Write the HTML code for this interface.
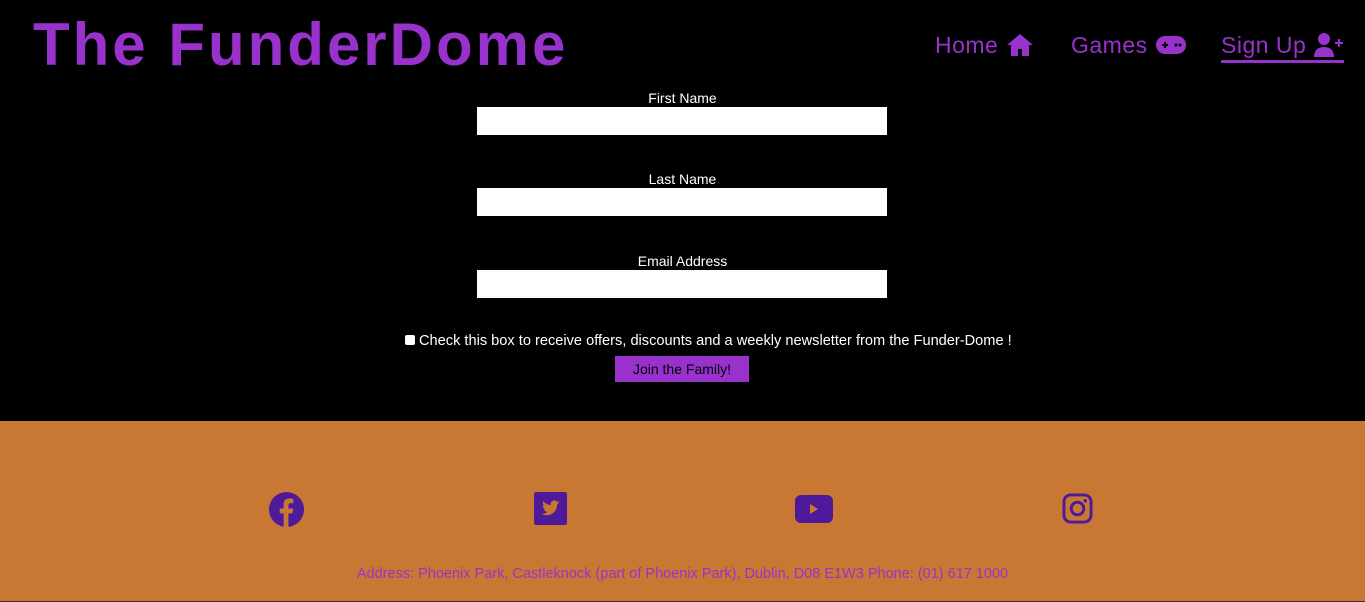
<!DOCTYPE html>
<html><head><style>
body{margin:0;width:1365px;height:602px;background:#000;font-family:"Liberation Sans",sans-serif;overflow:hidden;position:relative}
.logo{position:absolute;left:33px;top:10px;color:#9932cc;font-size:60px;font-weight:bold;letter-spacing:3px;line-height:70px}
.nav{position:absolute;top:30px;color:#9932cc;font-size:23px;line-height:30px;display:flex;align-items:center;gap:8px;letter-spacing:.5px}
.nav svg{fill:#9932cc}
label{position:absolute;color:#fff;font-size:14px;width:100%;text-align:center;left:0}
.in{position:absolute;left:477px;width:410px;height:28px;background:#fff}
footer{position:absolute;left:0;top:421px;width:1365px;height:180px;background:#c87832;border-bottom:1px solid #333}
footer svg{position:absolute;fill:#4f1a99}
.addr{position:absolute;top:145px;width:100%;text-align:center;color:#9932cc;font-size:14.5px}
</style></head><body>
<div class="logo">The FunderDome</div>
<div class="nav" style="left:935px">Home <svg width="28" height="24" viewBox="0 0 28 24"><path d="M14 1L1 12h4v11h7v-7h4v7h7V12h4z"/></svg></div>
<div class="nav" style="left:1071px">Games <svg width="30" height="20" viewBox="0 0 30 20"><rect x="0" y="1" width="30" height="18" rx="9"/><g fill="#000"><rect x="6" y="9" width="6" height="2"/><rect x="8" y="7" width="2" height="6"/><circle cx="20" cy="10" r="1.5"/><circle cx="24" cy="10" r="1.5"/></g></svg></div>
<div class="nav" style="left:1221px;border-bottom:3px solid #9932cc;padding-bottom:0">Sign Up <svg width="30" height="24" viewBox="0 0 30 24"><circle cx="10" cy="6" r="6"/><path d="M0 24c0-7 4-10 10-10s10 3 10 10z"/><rect x="21" y="9" width="8" height="2"/><rect x="24" y="6" width="2" height="8"/></svg></div>
<label style="top:90px">First Name</label><div class="in" style="top:107px"></div>
<label style="top:171px">Last Name</label><div class="in" style="top:188px"></div>
<label style="top:253px">Email Address</label><div class="in" style="top:270px"></div>
<div style="position:absolute;top:333px;left:405px;white-space:nowrap;color:#fff;font-size:14.6px"><span style="display:inline-block;width:10px;height:10px;background:#fff;border-radius:2px;margin-right:4px"></span>Check this box to receive offers, discounts and a weekly newsletter from the Funder-Dome !</div>
<div style="position:absolute;left:615px;top:356px;width:134px;height:26px;background:#9932cc;color:#000;font-size:14px;line-height:26px;text-align:center">Join the Family!</div>
<footer>
<svg style="left:269px;top:71px" width="35" height="35" viewBox="0 0 36 36"><circle cx="18" cy="18" r="18"/><path fill="#c87832" d="M20 36V22h4l1-5h-5v-3c0-1.5.5-2.5 2.5-2.5H25V7c-1 0-2.5-.3-4-.3-4 0-6 2.3-6 6.3V17h-4v5h4v14z"/></svg>
<svg style="left:534px;top:71px" width="33" height="33" viewBox="0 0 32 32"><rect width="32" height="32" rx="2"/><path fill="#c87832" d="M25 10c-.7.3-1.4.5-2 .6.8-.5 1.3-1.2 1.6-2-.7.4-1.5.7-2.3.9a3.5 3.5 0 0 0-6 3.2c-3-.2-5.6-1.6-7.3-3.7-1 1.6-.4 3.7 1 4.7-.6 0-1.1-.2-1.6-.4 0 1.7 1.2 3.2 2.8 3.5-.5.1-1 .2-1.6.1.5 1.4 1.8 2.4 3.3 2.5A7 7 0 0 1 7 21a10 10 0 0 0 15.4-8.9c.7-.5 1.3-1.1 1.8-1.8z"/></svg>
<svg style="left:795px;top:74px" width="38" height="28" viewBox="0 0 38 28"><rect width="38" height="28" rx="6"/><path fill="#c87832" d="M15 9v10l8-5z"/></svg>
<svg style="left:1062px;top:72px" width="31" height="31" viewBox="0 0 32 32"><rect x="2" y="2" width="28" height="28" rx="7" fill="none" stroke="#4f1a99" stroke-width="3"/><circle cx="16" cy="16" r="6.5" fill="none" stroke="#4f1a99" stroke-width="3"/><circle cx="24" cy="8" r="1.8"/></svg>
<div class="addr">Address: Phoenix Park, Castleknock (part of Phoenix Park), Dublin, D08 E1W3 Phone: (01) 617 1000</div>
</footer>
</body></html>
